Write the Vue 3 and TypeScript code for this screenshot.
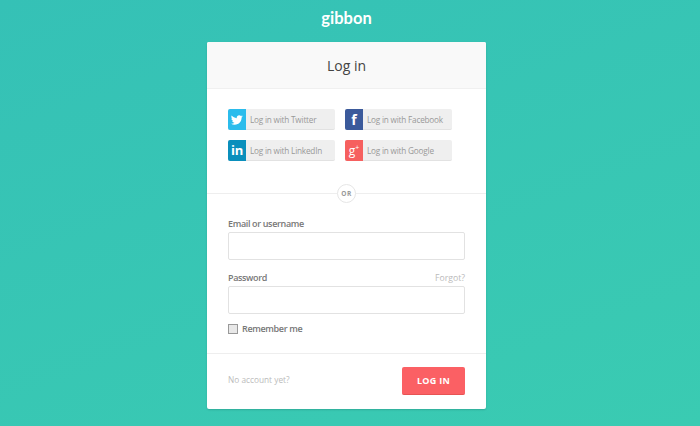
<script setup lang="ts">
const providers = [
  { name: 'Twitter', cls: 'twitter' },
  { name: 'Facebook', cls: 'facebook' },
  { name: 'LinkedIn', cls: 'linkedin' },
  { name: 'Google', cls: 'google' },
]
</script>

<template>
  <div class="page">
    <div class="logo">gibbon</div>
    <div class="card">
      <div class="card-head">Log in</div>
      <div class="social">
        <a v-for="p in providers" :key="p.name" class="social-btn">
          <span class="social-icon" :class="p.cls">
            <svg v-if="p.cls === 'twitter'" viewBox="0 0 24 24" width="12" height="12">
              <path fill="#fff" d="M23.6 4.6c-.9.4-1.8.7-2.8.8 1-.6 1.800-1.600 2.200-2.700-1 .6-2 1-3.100 1.200C19 2.900 17.700 2.300 16.300 2.300c-2.700 0-4.900 2.200-4.900 4.900 0 .4 0 .8.100 1.100C7.400 8.100 3.800 6.100 1.400 3.100 1 3.800.7 4.700.7 5.600c0 1.700.9 3.200 2.200 4.100-.8 0-1.600-.2-2.200-.6v.1c0 2.400 1.700 4.400 3.900 4.800-.4.100-.8.200-1.300.2-.3 0-.6 0-.9-.100.6 2 2.400 3.400 4.600 3.400-1.700 1.300-3.800 2.100-6.100 2.100-.4 0-.8 0-1.200-.100 2.200 1.400 4.800 2.200 7.500 2.200 9.100 0 14-7.500 14-14v-.6c1-.7 1.800-1.600 2.500-2.600z" />
            </svg>
            <span v-else-if="p.cls === 'facebook'" class="glyph fb">f</span>
            <span v-else-if="p.cls === 'linkedin'" class="glyph in">in</span>
            <span v-else class="glyph gp">g<sup>+</sup></span>
          </span>
          <span class="social-text">Log in with {{ p.name }}</span>
        </a>
      </div>
      <div class="or-row">
        <span class="or">OR</span>
      </div>
      <form class="form" @submit.prevent>
        <div class="field">
          <label class="label">Email or username</label>
          <input class="input" type="text" />
        </div>
        <div class="field second">
          <div class="label-row">
            <label class="label">Password</label>
            <a class="forgot">Forgot?</a>
          </div>
          <input class="input" type="password" />
        </div>
        <label class="remember">
          <span class="box"></span>
          Remember me
        </label>
      </form>
      <div class="card-foot">
        <a class="signup">No account yet?</a>
        <button class="submit" type="button">LOG IN</button>
      </div>
    </div>
  </div>
</template>

<style>
html,
body {
  margin: 0;
  overflow: hidden;
}
</style>

<style scoped>
.page {
  box-sizing: border-box;
  width: 700px;
  height: 426px;
  padding: 8px 7px 0 0;
  display: flex;
  flex-direction: column;
  align-items: center;
  background: linear-gradient(160deg, #35c1b6 0%, #3acbb2 100%);
  font-family: "Open Sans", "Liberation Sans", sans-serif;
}

.logo {
  height: 34px;
  line-height: 20px;
  font-family: Lato, "Open Sans", sans-serif;
  font-size: 16.500px;
  font-weight: 700;
  color: #fff;
}

.card {
  box-sizing: border-box;
  width: 279px;
  height: 367px;
  display: flex;
  flex-direction: column;
  background: #fff;
  border-radius: 2px;
  box-shadow: 0 1px 2px rgba(0, 0, 0, 0.15);
}

.card-head {
  box-sizing: border-box;
  height: 47px;
  line-height: 47px;
  text-align: center;
  font-size: 14px;
  color: #444;
  background: #f9f9f9;
  border-bottom: 1px solid #f0f0f0;
  border-radius: 2px 2px 0 0;
}

.social {
  display: grid;
  grid-template-columns: 107px 107px;
  column-gap: 10px;
  row-gap: 10px;
  padding: 20px 21px 0;
}

.social-btn {
  box-sizing: border-box;
  display: flex;
  height: 21px;
  background: #efefef;
  border-bottom: 1px solid #e2e2e2;
  border-radius: 2px;
}

.social-icon {
  flex: none;
  width: 18px;
  height: 21px;
  display: flex;
  align-items: center;
  justify-content: center;
  overflow: hidden;
  border-radius: 2px 0 0 2px;
  color: #fff;
}

.twitter { background: #2bbcec; }
.facebook { background: #3b5a9b; }
.linkedin { background: #0a8fbc; }
.google { background: #f6605f; }

.glyph {
  font-family: "Open Sans", sans-serif;
  font-weight: 700;
  line-height: 21px;
}

.fb { font-size: 14px; }
.in { font-size: 13px; letter-spacing: -0.3px; }
.gp { font-weight: 400; font-size: 12px; }
.gp sup { font-size: 7px; line-height: 0; }

.social-text {
  padding-left: 4px;
  line-height: 21px;
  font-size: 8.200px;
  letter-spacing: -0.2px;
  color: #999;
  white-space: nowrap;
}

.or-row {
  position: relative;
  height: 1px;
  margin-top: 32px;
  background: #eeeeee;
  display: flex;
  justify-content: center;
}

.or {
  position: absolute;
  top: -9px;
  box-sizing: border-box;
  width: 19px;
  height: 19px;
  line-height: 17px;
  text-align: center;
  background: #fff;
  border: 1px solid #e6e6e6;
  border-radius: 50%;
  font-size: 6.500px;
  font-weight: 700;
  letter-spacing: 0.5px;
  color: #999;
}

.form {
  padding: 23px 21px 0;
}

.label-row {
  display: flex;
  justify-content: space-between;
}

.label {
  display: block;
  height: 15px;
  line-height: 14px;
  font-size: 9px;
  letter-spacing: -0.35px;
  font-weight: 600;
  color: #777;
}

.forgot {
  line-height: 14px;
  font-size: 8.700px;
  color: #bbb;
}

.input {
  display: block;
  box-sizing: border-box;
  width: 237px;
  height: 28px;
  padding: 0 8px;
  background: #fff;
  border: 1px solid #e2e2e2;
  border-radius: 2px;
  outline: none;
}

.second {
  margin-top: 11px;
}

.remember {
  display: flex;
  align-items: center;
  gap: 4px;
  margin-top: 9px;
  height: 11px;
  font-size: 9px;
  letter-spacing: -0.35px;
  font-weight: 600;
  color: #777;
}

.box {
  box-sizing: border-box;
  width: 10px;
  height: 10px;
  background: #e8e8e8;
  border: 1px solid #999;
}

.card-foot {
  flex: 1;
  display: flex;
  justify-content: space-between;
  align-items: flex-start;
  margin-top: 19px;
  padding: 13px 21px 0;
  border-top: 1px solid #eeeeee;
}

.signup {
  margin-top: 6px;
  line-height: 14px;
  font-size: 8.300px;
  color: #bbb;
}

.submit {
  width: 63px;
  height: 28px;
  padding: 0;
  border: 0;
  border-bottom: 1px solid #e75353;
  border-radius: 2px;
  background: #fb6064;
  color: #fff;
  font-family: inherit;
  font-size: 9px;
  font-weight: 700;
  letter-spacing: 0.3px;
}
</style>
